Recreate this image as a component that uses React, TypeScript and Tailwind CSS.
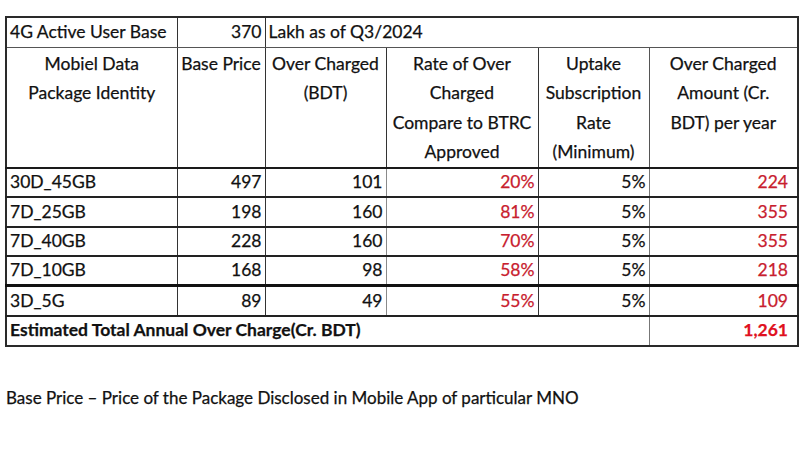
import React from "react";

const rows = [
  ["30D_45GB", "497", "101", "20%", "5%", "224"],
  ["7D_25GB", "198", "160", "81%", "5%", "355"],
  ["7D_40GB", "228", "160", "70%", "5%", "355"],
  ["7D_10GB", "168", "98", "58%", "5%", "218"],
  ["3D_5G", "89", "49", "55%", "5%", "109"],
];

export default function App() {
  return (
    <div
      className="w-[800px] h-[450px] bg-white pt-[16px] pl-[5px] text-[#111] text-[17.5px] [-webkit-text-stroke:0.25px_currentColor]"
      style={{ fontFamily: "Lato, 'Liberation Sans', sans-serif" }}
    >
      <table className="border-collapse table-fixed w-[792px] border-2 border-[#2a2a2a]">
        <colgroup>
          <col className="w-[171px]" />
          <col className="w-[88px]" />
          <col className="w-[121px]" />
          <col className="w-[152px]" />
          <col className="w-[111px]" />
          <col className="w-[149px]" />
        </colgroup>
        <tbody>
          <tr className="h-[30px]">
            <td className="px-[3px] border-r border-r-[#333] border-b border-b-[#555] align-middle">4G Active User Base</td>
            <td className="px-[3px] text-right border-r border-r-[#333] border-b border-b-[#555] align-middle">370</td>
            <td colSpan={4} className="px-[3px] border-b border-b-[#555] align-middle">Lakh as of Q3/2024</td>
          </tr>
          <tr className="h-[118px] text-center leading-[29.5px] align-top">
            <td className="px-[2px] pt-[1px] border-r border-r-[#333] border-b-2 border-b-[#1a1a1a]">
              Mobiel Data
              <br />
              Package Identity
            </td>
            <td className="px-[2px] pt-[1px] border-r border-r-[#333] border-b-2 border-b-[#1a1a1a]">Base Price</td>
            <td className="px-[2px] pt-[1px] border-r border-r-[#333] border-b-2 border-b-[#1a1a1a]">
              Over Charged
              <br />
              (BDT)
            </td>
            <td className="px-[2px] pt-[1px] border-r border-r-[#333] border-b-2 border-b-[#1a1a1a]">
              Rate of Over
              <br />
              Charged
              <br />
              Compare to BTRC
              <br />
              Approved
            </td>
            <td className="px-[2px] pt-[1px] border-r border-r-[#555] border-b-2 border-b-[#1a1a1a]">
              Uptake
              <br />
              Subscription
              <br />
              Rate
              <br />
              (Minimum)
            </td>
            <td className="px-[2px] pt-[1px] border-b-2 border-b-[#1a1a1a]">
              Over Charged
              <br />
              Amount (Cr.
              <br />
              BDT) per year
            </td>
          </tr>
          {rows.map((r, i) => {
            const bb =
              i === 3
                ? "border-b-[3px] border-b-[#111]"
                : "border-b-2 border-b-[#222]";
            return (
              <tr key={i} className={i === 4 ? "h-[30px]" : "h-[29.5px]"}>
                <td className={`px-[3px] border-r border-r-[#333] ${bb}`}>{r[0]}</td>
                <td className={`px-[3px] text-right border-r border-r-[#333] ${bb}`}>{r[1]}</td>
                <td className={`px-[3px] text-right border-r border-r-[#8a8a8a] ${bb}`}>{r[2]}</td>
                <td className={`px-[3px] text-right text-[#c8202e] border-r border-r-[#333] ${bb}`}>{r[3]}</td>
                <td className={`px-[3px] text-right border-r border-r-[#777] ${bb}`}>{r[4]}</td>
                <td className={`px-[9px] text-right text-[#c8202e] ${bb}`}>{r[5]}</td>
              </tr>
            );
          })}
          <tr className="h-[30px] font-bold">
            <td colSpan={5} className="px-[3px] border-r border-r-[#777]">
              Estimated Total Annual Over Charge(Cr. BDT)
            </td>
            <td className="px-[9px] text-right text-[#e0101e]">1,261</td>
          </tr>
        </tbody>
      </table>
      <div className="mt-[38px] pl-[1px] text-[17px]">
        Base Price – Price of the Package Disclosed in Mobile App of particular MNO
      </div>
    </div>
  );
}
